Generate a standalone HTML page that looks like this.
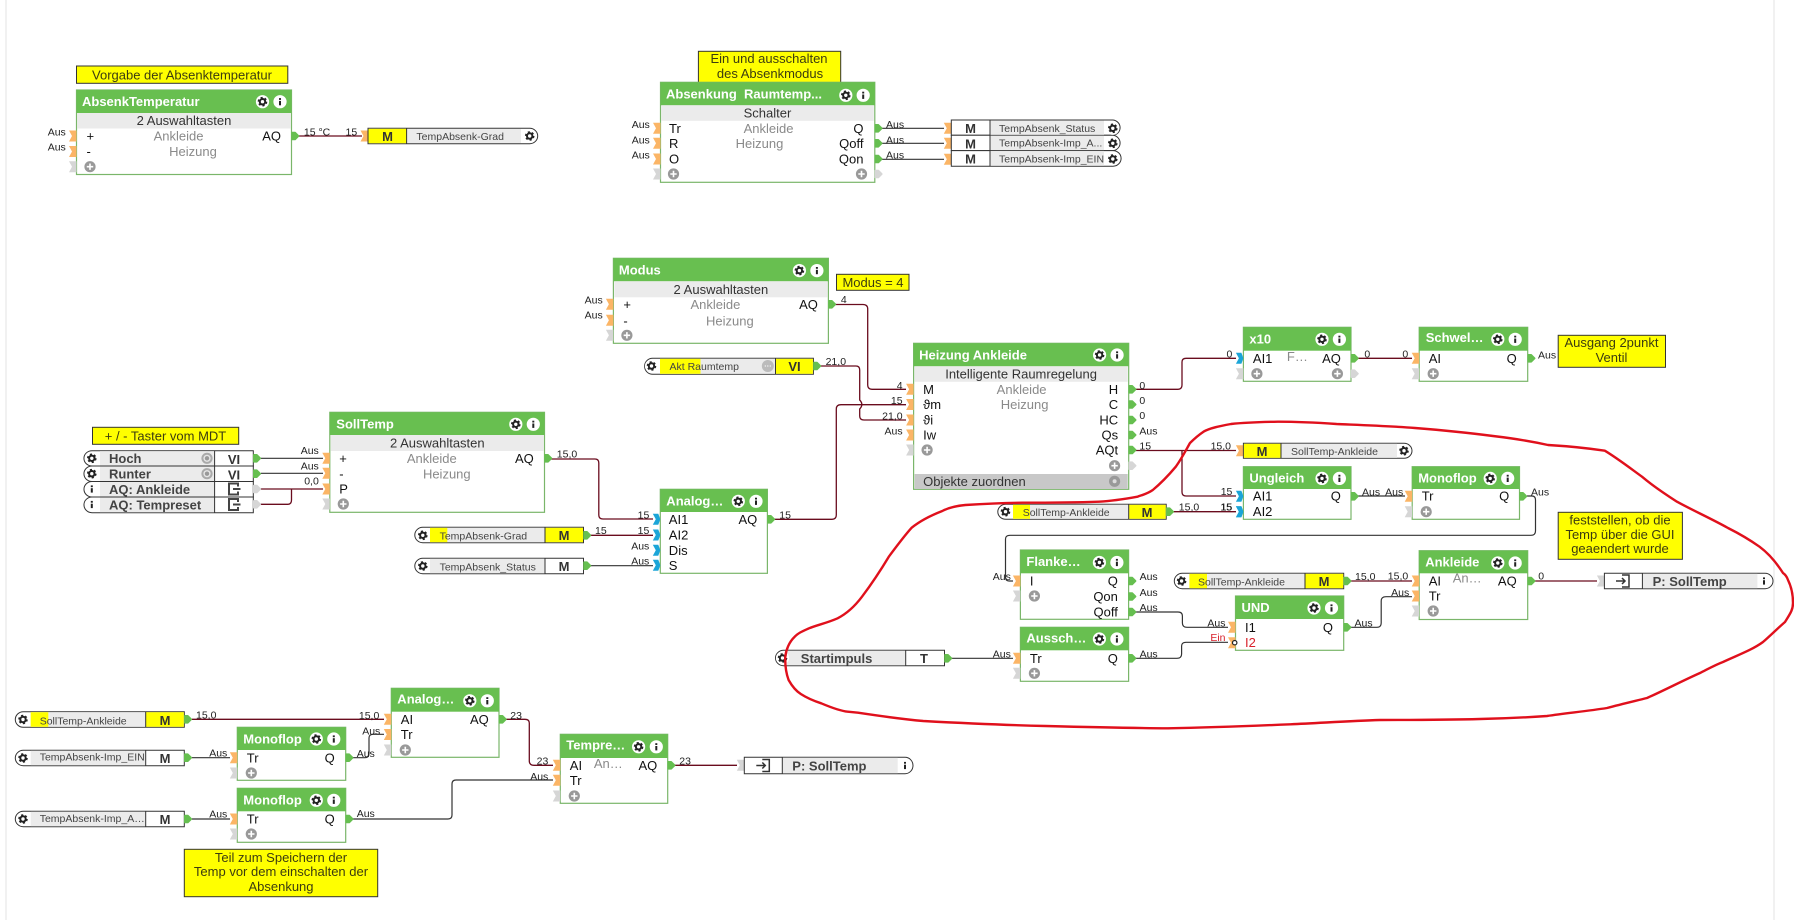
<!DOCTYPE html>
<html><head><meta charset="utf-8"><title>Logik</title>
<style>
html,body{margin:0;padding:0;background:#fff;width:1794px;height:920px;overflow:hidden}
svg{display:block;font-family:"Liberation Sans",Arial,sans-serif}
.bx{fill:#fff;stroke:#7ab66a;stroke-width:1.2}
.hd{fill:#68bf50}
.sb{fill:#ebebeb}
.tt{fill:#fff;font-weight:bold;font-size:13px}
.t{fill:#111;font-size:13px}
.tr{fill:#111;font-size:13px;text-anchor:end}
.g{fill:#8a8a8a;font-size:13px;text-anchor:middle}
.s{fill:#333;font-size:13px;text-anchor:middle}
.l{fill:#222;font-size:10.5px}
.le{fill:#222;font-size:10.5px;text-anchor:end}
.bt{fill:#444;font-size:10.5px}
.bb{fill:#444;font-size:13px;font-weight:bold}
.m{fill:#333;font-size:13px;font-weight:bold;text-anchor:middle}
.n{fill:#3c3c10;font-size:13px;text-anchor:middle}
.ny{fill:#ff0;stroke:#333;stroke-width:1}
.o{fill:#fff;stroke:#333;stroke-width:1}
.gr{fill:#ebebeb}
.ye{fill:#ff0}
.d{stroke:#333;stroke-width:1}
.w{fill:none;stroke:#333;stroke-width:1.2}
.r{fill:none;stroke:#6a0c1e;stroke-width:1.3}
</style></head><body>
<svg width="1794" height="920" viewBox="0 0 1794 920" xmlns="http://www.w3.org/2000/svg">
<defs>
<g id="ci"><path d="M-7.5-5.5H0V5.5H-7.5L-4.5 0Z" fill="#fbb566"/></g>
<g id="cb"><path d="M-7.5-5.5H-2L0 0-2 5.5H-7.5L-4.5 0Z" fill="#1ba5d8"/></g>
<g id="cg"><path d="M-7.5-5.5H0V5.5H-7.5L-4.5 0Z" fill="#d6d6d6"/></g>
<g id="co"><path d="M0.5-3.5H3.5L7 0 3.5 3.5H0.5Z" fill="#66bf50" stroke="#66bf50" stroke-width="1.6" stroke-linejoin="round"/></g>
<g id="cx"><path d="M0.5-3.5H3.5L7 0 3.5 3.5H0.5Z" fill="#d6d6d6" stroke="#d6d6d6" stroke-width="1.6" stroke-linejoin="round"/></g>
<g id="gi"><circle r="6.6" fill="#fff"/><circle r="2.7" fill="none" stroke="#222" stroke-width="2"/><circle r="4" fill="none" stroke="#222" stroke-width="1.6" stroke-dasharray="2.1 2.1"/></g>
<g id="in"><circle r="6.6" fill="#fff"/><rect x="-1" y="-3.6" width="2" height="1.8" fill="#222"/><rect x="-1" y="-0.8" width="2" height="4.4" fill="#222"/></g>
<g id="pl"><circle r="5.6" fill="#999"/><path d="M-3.2 0H3.2M0-3.2V3.2" stroke="#fff" stroke-width="1.6"/></g>
<g id="ex"><path d="M4-2.5V-5.5H-5V5.5H4V2.5M-1 0H6.5" fill="none" stroke="#444" stroke-width="2"/></g>
<g id="en"><path d="M-1-6H6V6H-1M-7 0H2M-1-3 2 0-1 3" fill="none" stroke="#333" stroke-width="1.5"/></g>
<g id="tg"><circle r="5.6" fill="#aaa"/><circle r="3.6" fill="#e6e6e6"/><circle r="2.2" fill="#999"/></g>
<g id="dt"><circle r="6" fill="#bbb"/><path d="M-3 0H-2M-.5 0H.5M2 0H3" stroke="#fff" stroke-width="1.3"/></g>
</defs>

<rect x="5" y="0" width="2" height="920" fill="#f1f1f1"/>
<rect x="1773" y="0" width="2" height="920" fill="#f1f1f1"/>

<!-- wires -->
<path class="r" d="M299 136H362"/>
<path class="r" d="M835 304.5H863Q867.7 304.5 867.7 309V385Q867.7 389.3 872 389.3H906"/>
<path class="r" d="M820 366H856Q859.7 366 859.7 370V400Q864 404.5 859.7 409V416Q859.7 420 864 420H906"/>
<path class="r" d="M774 519.3H832Q836.3 519.3 836.3 515V409Q836.3 404.7 841 404.7H906"/>
<path class="r" d="M1135 389.3H1178Q1182 389.3 1182 385V362Q1182 358.3 1186 358.3H1236"/>
<path class="r" d="M1135 450.5H1236"/>
<path class="r" d="M1182 450.5V492Q1182 496 1186 496H1236"/>
<path class="r" d="M1358 358.3H1412"/>
<path class="r" d="M551 459H595Q598.8 459 598.8 463V515Q598.8 519 603 519H653"/>
<path class="r" d="M590 535.3H653"/>
<path class="r" d="M260 489H323"/>
<path class="r" d="M260 504.3H288Q291.5 504.3 291.5 500V489"/>
<path class="r" d="M1173 511.7H1236"/>
<path class="r" d="M192 719.3H384"/>
<path class="r" d="M506 719.3H525Q529.3 719.3 529.3 723V761Q529.3 765.3 534 765.3H553"/>
<path class="r" d="M675 765.3H737"/>
<path class="r" d="M1350 581H1412"/>
<path class="r" d="M1535 581H1597"/>
<path class="w" d="M882 128.3H944M882 143.3H944M882 159.3H944"/>
<path class="w" d="M261 458.3H323M261 473.3H323"/>
<path class="w" d="M590 565.7H653"/>
<path class="w" d="M1358 496H1405"/>
<path class="w" d="M1527 496H1532Q1535.5 496 1535.5 500V531Q1535.5 535.3 1531 535.3H1010Q1005.5 535.3 1005.5 539V577Q1005.5 581 1009 581H1013"/>
<path class="w" d="M1135 612H1178Q1182.4 612 1182.4 616V623Q1182.4 627.3 1187 627.3H1228"/>
<path class="w" d="M1135 658.3H1177Q1181.6 658.3 1181.6 654V646Q1181.6 642.3 1186 642.3H1228"/>
<path class="w" d="M1350 627.3H1377Q1381.2 627.3 1381.2 623V601Q1381.2 596.7 1386 596.7H1412"/>
<path class="w" d="M951 658.3H1013"/>
<path class="w" d="M192 757.7H230"/>
<path class="w" d="M192 819H230"/>
<path class="w" d="M353 757.7H365Q369 757.7 369 753V738Q369 734.3 373 734.3H384"/>
<path class="w" d="M353 819H448Q452 819 452 815V784Q452 780 456 780H553"/>

<!-- notes -->
<rect class="ny" x="76.5" y="66" width="211.3" height="17.3"/><text class="n" x="182" y="79.5">Vorgabe der Absenktemperatur</text>
<rect class="ny" x="698.4" y="51.3" width="142.3" height="32"/><text class="n" x="769" y="63">Ein und ausschalten</text><text class="n" x="770" y="78">des Absenkmodus</text>
<rect class="ny" x="836.5" y="274.3" width="72.5" height="16"/><text class="n" x="873" y="287">Modus = 4</text>
<rect class="ny" x="92.5" y="427.3" width="146.2" height="17"/><text class="n" x="165.5" y="440.5">+ / - Taster vom MDT</text>
<rect class="ny" x="1558.2" y="335.3" width="107.3" height="32"/><text class="n" x="1611.5" y="347">Ausgang 2punkt</text><text class="n" x="1611.5" y="362">Ventil</text>
<rect class="ny" x="1558.2" y="512.3" width="124.2" height="47"/><text class="n" x="1620" y="524.5">feststellen, ob die</text><text class="n" x="1620" y="539">Temp über die GUI</text><text class="n" x="1620" y="553">geaendert wurde</text>
<rect class="ny" x="184.3" y="849.3" width="193.4" height="47.4"/><text class="n" x="281" y="862">Teil zum Speichern der</text><text class="n" x="281" y="876">Temp vor dem einschalten der</text><text class="n" x="281" y="891">Absenkung</text>

<!-- AbsenkTemperatur -->
<g transform="translate(76.5 90)">
<rect class="bx" width="215" height="84.5"/><rect class="hd" width="215" height="23"/><rect class="sb" x="1" y="23" width="213" height="15.5"/>
<text class="tt" x="5.5" y="16">AbsenkTemperatur</text><use href="#gi" x="186" y="11.7"/><use href="#in" x="203.5" y="11.7"/>
<text class="s" x="107.5" y="35">2 Auswahltasten</text>
<use href="#ci" y="46"/><use href="#ci" y="61.5"/><use href="#cg" y="76.7"/>
<text class="le" x="-10.7" y="45.5">Aus</text><text class="le" x="-10.7" y="60.5">Aus</text>
<text class="t" x="10" y="50.5">+</text><text class="t" x="10" y="66">-</text><use href="#pl" x="13.5" y="76.7"/>
<text class="g" x="102" y="50.5">Ankleide</text><text class="g" x="116.5" y="66">Heizung</text>
<text class="tr" x="204.5" y="50.5">AQ</text><use href="#co" x="215" y="46"/>
<text class="l" x="227.4" y="45.5">15 °C</text><text class="l" x="269" y="45.5">15</text>
</g>
<!-- M TempAbsenk-Grad -->
<use href="#ci" x="368" y="136"/>
<path class="o" d="M368 128.3H529.7A8 7.7 0 0 1 529.7 143.7H368Z"/><rect class="gr" x="407" y="129" width="114" height="14"/><rect class="ye" x="368.5" y="128.8" width="38" height="14.4"/><path class="d" d="M406.6 128.3V143.7"/>
<text class="m" x="387.5" y="141">M</text><text class="bt" x="416.4" y="140">TempAbsenk-Grad</text><use href="#gi" x="529.7" y="136"/>

<!-- Absenkung -->
<g transform="translate(660.5 82.3)">
<rect class="bx" width="214.3" height="100"/><rect class="hd" width="214.3" height="23"/><rect class="sb" x="1" y="23" width="212.3" height="15.5"/>
<text class="tt" x="5.5" y="16">Absenkung&#160; Raumtemp...</text><use href="#gi" x="185.3" y="13"/><use href="#in" x="202.7" y="13"/>
<text class="s" x="107" y="35">Schalter</text>
<use href="#ci" y="46"/><use href="#ci" y="61"/><use href="#ci" y="76.7"/><use href="#cg" y="91.7"/>
<text class="le" x="-10.7" y="45.5">Aus</text><text class="le" x="-10.7" y="61">Aus</text><text class="le" x="-10.7" y="76">Aus</text>
<text class="t" x="8.5" y="50.5">Tr</text><text class="t" x="8.5" y="65.5">R</text><text class="t" x="8.5" y="81.2">O</text><use href="#pl" x="13" y="91.7"/>
<text class="g" x="108" y="50.5">Ankleide</text><text class="g" x="99" y="65.5">Heizung</text>
<text class="tr" x="203" y="50.5">Q</text><text class="tr" x="203" y="65.5">Qoff</text><text class="tr" x="203" y="81.2">Qon</text><use href="#pl" x="201" y="91.7"/>
<use href="#co" x="214.3" y="46"/><use href="#co" x="214.3" y="61"/><use href="#co" x="214.3" y="76.7"/><use href="#cx" x="214.3" y="91.7"/>
<text class="l" x="225.5" y="45.5">Aus</text><text class="l" x="225.5" y="61">Aus</text><text class="l" x="225.5" y="76">Aus</text>
</g>
<!-- M triple -->
<use href="#ci" x="951.3" y="128.3"/><use href="#ci" x="951.3" y="143.3"/><use href="#ci" x="951.3" y="159.3"/>
<path class="o" d="M951.3 120H1113A8 7.7 0 0 1 1113 135.3H951.3Z"/>
<path class="o" d="M951.3 135.3H1113A8 7.7 0 0 1 1113 150.6H951.3Z"/>
<path class="o" d="M951.3 150.6H1113A8 7.7 0 0 1 1113 166.2H951.3Z"/>
<rect class="gr" x="990" y="120.5" width="114" height="14.3"/><rect class="gr" x="990" y="135.8" width="114" height="14.3"/><rect class="gr" x="990" y="151.1" width="114" height="14.6"/>
<path class="d" d="M990 120V166.2"/>
<text class="m" x="970.5" y="133">M</text><text class="m" x="970.5" y="148.5">M</text><text class="m" x="970.5" y="163.5">M</text>
<text class="bt" x="999" y="132">TempAbsenk_Status</text><text class="bt" x="999" y="146.5">TempAbsenk-Imp_A...</text><text class="bt" x="999" y="162.5">TempAbsenk-Imp_EIN</text>
<use href="#gi" x="1112.8" y="128.3"/><use href="#gi" x="1112.8" y="143.3"/><use href="#gi" x="1112.8" y="159"/>

<!-- Modus -->
<g transform="translate(613.4 258.3)">
<rect class="bx" width="215" height="85"/><rect class="hd" width="215" height="23"/><rect class="sb" x="1" y="23" width="213" height="16"/>
<text class="tt" x="5.5" y="16">Modus</text><use href="#gi" x="186" y="12.3"/><use href="#in" x="203.5" y="12.3"/>
<text class="s" x="107.5" y="35.5">2 Auswahltasten</text>
<use href="#ci" y="46"/><use href="#ci" y="62"/><use href="#cg" y="77"/>
<text class="le" x="-10.7" y="45">Aus</text><text class="le" x="-10.7" y="60">Aus</text>
<text class="t" x="10" y="50.5">+</text><text class="t" x="10" y="67">-</text><use href="#pl" x="13.5" y="77"/>
<text class="g" x="102" y="50.5">Ankleide</text><text class="g" x="116.5" y="67">Heizung</text>
<text class="tr" x="204.5" y="50.5">AQ</text><use href="#co" x="215" y="46"/>
<text class="l" x="227.5" y="44.5">4</text>
</g>

<!-- Akt Raumtemp -->
<path class="o" d="M652.6 358.3H813.4V374.3H652.6A8 8 0 0 1 652.6 358.3Z"/><rect class="gr" x="660" y="358.8" width="115.5" height="15"/><rect class="ye" x="660" y="358.8" width="40.5" height="15"/><rect class="ye" x="775.5" y="358.8" width="37.4" height="15"/><path class="d" d="M775.5 358.3V374.3"/>
<use href="#gi" x="651.5" y="366"/><text class="bt" x="669.5" y="370">Akt Raumtemp</text><use href="#dt" x="767.8" y="366"/><text class="m" x="794.5" y="371">VI</text>
<use href="#co" x="813.4" y="366"/><text class="l" x="825.6" y="365">21,0</text>

<!-- Heizung -->
<g transform="translate(913.6 343.3)">
<rect class="bx" width="215.1" height="146"/><rect class="hd" width="215.1" height="23"/><rect class="sb" x="1" y="23" width="213.1" height="15.5"/>
<rect x="1" y="130.7" width="213.1" height="15" fill="#c8c8c8"/>
<text class="tt" x="5.5" y="16">Heizung Ankleide</text><use href="#gi" x="186" y="11.7"/><use href="#in" x="203.5" y="11.7"/>
<text class="s" x="107.5" y="35">Intelligente Raumregelung</text>
<use href="#ci" y="46"/><use href="#ci" y="61.2"/><use href="#ci" y="76.7"/><use href="#ci" y="91.7"/><use href="#cg" y="106.7"/>
<text class="le" x="-11" y="45.5">4</text><text class="le" x="-11" y="60.5">15</text><text class="le" x="-11" y="76">21,0</text><text class="le" x="-11" y="91">Aus</text>
<text class="t" x="9.5" y="50.5">M</text><text class="t" x="9.5" y="65.7">ϑm</text><text class="t" x="9.5" y="81.2">ϑi</text><text class="t" x="9.5" y="96.2">Iw</text><use href="#pl" x="13.5" y="106.7"/>
<text class="g" x="108" y="50.5">Ankleide</text><text class="g" x="111" y="65.7">Heizung</text>
<text class="tr" x="204.5" y="50.5">H</text><text class="tr" x="204.5" y="65.7">C</text><text class="tr" x="204.5" y="81.2">HC</text><text class="tr" x="204.5" y="96.2">Qs</text><text class="tr" x="204.5" y="111.2">AQt</text><use href="#pl" x="201" y="122.4"/>
<use href="#co" x="215.1" y="46"/><use href="#co" x="215.1" y="61.2"/><use href="#co" x="215.1" y="76.7"/><use href="#co" x="215.1" y="91.7"/><use href="#co" x="215.1" y="106.7"/><use href="#cx" x="215.1" y="122.4"/>
<text class="l" x="225.8" y="45.5">0</text><text class="l" x="225.8" y="60.5">0</text><text class="l" x="225.8" y="75.5">0</text><text class="l" x="225.8" y="91">Aus</text><text class="l" x="225.8" y="106">15</text>
<text x="9.5" y="142.5" fill="#333" font-size="13">Objekte zuordnen</text><circle cx="201" cy="138" r="5.6" fill="#999"/><circle cx="201" cy="138" r="2" fill="#ddd"/>
</g>

<!-- x10 -->
<g transform="translate(1243.4 327.3)">
<rect class="bx" width="107.6" height="54"/><rect class="hd" width="107.6" height="23.4"/>
<text class="tt" x="6" y="16">x10</text><use href="#gi" x="78.6" y="12"/><use href="#in" x="96" y="12"/>
<use href="#cb" y="31"/><use href="#cg" y="46.4"/><text class="le" x="-11" y="30">0</text>
<text class="t" x="9.5" y="35.5">AI1</text><use href="#pl" x="13.5" y="46.4"/>
<text class="g" x="54" y="33.5">F…</text>
<text class="tr" x="97.5" y="35.5">AQ</text><use href="#pl" x="94" y="46.4"/><use href="#co" x="107.6" y="31"/><use href="#cx" x="107.6" y="46.4"/>
<text class="l" x="121" y="30">0</text>
</g>
<!-- Schwel -->
<g transform="translate(1419.2 327.3)">
<rect class="bx" width="108.5" height="54"/><rect class="hd" width="108.5" height="23.4"/>
<text class="tt" x="6.5" y="14.5">Schwel…</text><use href="#gi" x="78.6" y="12"/><use href="#in" x="96" y="12"/>
<use href="#ci" y="31"/><use href="#cg" y="46.4"/><text class="le" x="-11" y="30">0</text>
<text class="t" x="9.5" y="35.5">AI</text><use href="#pl" x="14" y="46.4"/>
<text class="tr" x="97.5" y="35.5">Q</text><use href="#co" x="108.5" y="31"/>
<text class="l" x="118.8" y="31">Aus</text>
</g>

<!-- M SollTemp-Ankleide right -->
<use href="#ci" x="1243.4" y="450.7"/><text class="le" x="1231" y="449.5">15,0</text>
<path class="o" d="M1243.4 443.3H1404A8 7.5 0 0 1 1404 458.3H1243.4Z"/><rect class="gr" x="1281" y="443.8" width="116" height="14"/><rect class="ye" x="1243.9" y="443.8" width="37" height="14"/><path class="d" d="M1281 443.3V458.3"/>
<text class="m" x="1262" y="456">M</text><text class="bt" x="1291" y="455">SollTemp-Ankleide</text><use href="#gi" x="1404" y="450.7"/>

<!-- Ungleich -->
<g transform="translate(1243.4 466.7)">
<rect class="bx" width="107.6" height="52.6"/><rect class="hd" width="107.6" height="22.3"/>
<text class="tt" x="6" y="16">Ungleich</text><use href="#gi" x="78.6" y="11.7"/><use href="#in" x="96" y="11.7"/>
<use href="#cb" y="29.6"/><use href="#cb" y="45"/><text class="le" x="-11" y="28.5">15</text><text class="le" x="-11" y="44">15</text>
<text class="t" x="9.5" y="34">AI1</text><text class="t" x="9.5" y="49.5">AI2</text>
<text class="tr" x="97.5" y="34">Q</text><use href="#co" x="107.6" y="29.6"/>
<text class="l" x="118.6" y="29">Aus</text>
</g>
<!-- Monoflop right -->
<g transform="translate(1412.2 466.7)">
<rect class="bx" width="107.3" height="52.6"/><rect class="hd" width="107.3" height="22.3"/>
<text class="tt" x="6" y="16">Monoflop</text><use href="#gi" x="78" y="11.7"/><use href="#in" x="95.5" y="11.7"/>
<use href="#ci" y="29.6"/><use href="#cg" y="45"/><text class="le" x="-9" y="29">Aus</text>
<text class="t" x="9.5" y="34">Tr</text><use href="#pl" x="14" y="45"/>
<text class="tr" x="97" y="34">Q</text><use href="#co" x="107.3" y="29.6"/>
<text class="l" x="118.8" y="29">Aus</text>
</g>

<!-- SollTemp-Ankleide centre -->
<path class="o" d="M1005.8 504.3H1166.2V519.3H1005.8A8 7.5 0 0 1 1005.8 504.3Z"/><rect class="gr" x="1013" y="504.8" width="115.7" height="14"/><rect class="ye" x="1013" y="504.8" width="17" height="14"/><rect class="ye" x="1128.7" y="504.8" width="37" height="14"/><path class="d" d="M1128.7 504.3V519.3"/>
<use href="#gi" x="1005.5" y="511.7"/><text class="bt" x="1022.7" y="516">SollTemp-Ankleide</text><text class="m" x="1147" y="517">M</text>
<use href="#co" x="1166.2" y="511.7"/><text class="l" x="1178.8" y="510.5">15,0</text>
<text class="le" x="1232" y="510.5">15</text><use href="#cb" x="1243.4" y="511.7"/>

<!-- Analog centre -->
<g transform="translate(660.3 489.3)">
<rect class="bx" width="107.1" height="84"/><rect class="hd" width="107.1" height="22.7"/>
<text class="tt" x="6" y="16">Analog…</text><use href="#gi" x="78" y="12"/><use href="#in" x="95.7" y="12"/>
<use href="#cb" y="30"/><use href="#cb" y="45.7"/><use href="#cb" y="61"/><use href="#cb" y="76"/>
<text class="le" x="-11" y="29">15</text><text class="le" x="-11" y="44.5">15</text><text class="le" x="-11" y="60">Aus</text><text class="le" x="-11" y="75">Aus</text>
<text class="t" x="8.5" y="34.5">AI1</text><text class="t" x="8.5" y="50.2">AI2</text><text class="t" x="8.5" y="65.5">Dis</text><text class="t" x="8.5" y="80.5">S</text>
<text class="tr" x="97" y="34.5">AQ</text><use href="#co" x="107.1" y="30"/>
<text class="l" x="119" y="29">15</text>
</g>

<!-- SollTemp -->
<g transform="translate(329.8 412.3)">
<rect class="bx" width="214.7" height="100"/><rect class="hd" width="214.7" height="22.7"/><rect class="sb" x="1" y="22.7" width="212.7" height="16"/>
<text class="tt" x="6.5" y="16">SollTemp</text><use href="#gi" x="186" y="12"/><use href="#in" x="203.5" y="12"/>
<text class="s" x="107.5" y="35">2 Auswahltasten</text>
<use href="#ci" y="46"/><use href="#ci" y="61"/><use href="#ci" y="76.7"/><use href="#cg" y="91.7"/>
<text class="le" x="-11" y="41.5">Aus</text><text class="le" x="-11" y="57">Aus</text><text class="le" x="-11" y="72">0,0</text>
<text class="t" x="9.5" y="50.5">+</text><text class="t" x="9.5" y="66">-</text><text class="t" x="9.5" y="81.2">P</text><use href="#pl" x="13.5" y="91.7"/>
<text class="g" x="102" y="50.5">Ankleide</text><text class="g" x="117" y="66">Heizung</text>
<text class="tr" x="204" y="50.5">AQ</text><use href="#co" x="214.7" y="46"/>
<text class="l" x="227" y="45">15,0</text>
</g>
<!-- left VI list -->
<path class="o" d="M92 450.7H253.3V466H92A8 7.6 0 0 1 92 450.7Z"/>
<path class="o" d="M92 466H253.3V481.5H92A8 7.7 0 0 1 92 466Z"/>
<path class="o" d="M92 481.5H253.3V497H92A8 7.7 0 0 1 92 481.5Z"/>
<path class="o" d="M92 497H253.3V512.7H92A8 7.8 0 0 1 92 497Z"/>
<rect class="gr" x="100" y="451.2" width="114.6" height="14.3"/><rect class="gr" x="100" y="466.5" width="114.6" height="14.5"/><rect class="gr" x="100" y="482" width="114.6" height="14.5"/><rect class="gr" x="100" y="497.5" width="114.6" height="14.7"/>
<path class="d" d="M214.6 450.7V512.7"/>
<use href="#gi" x="91.8" y="458.3"/><use href="#gi" x="91.8" y="473.7"/><use href="#in" x="91.8" y="489"/><use href="#in" x="91.8" y="504.5"/>
<text class="bb" x="109" y="463">Hoch</text><text class="bb" x="109" y="478.5">Runter</text><text class="bb" x="109" y="494">AQ: Ankleide</text><text class="bb" x="109" y="509.5">AQ: Tempreset</text>
<use href="#tg" x="207" y="458.3"/><use href="#tg" x="207" y="473.7"/>
<text class="m" x="234" y="464">VI</text><text class="m" x="234" y="479.5">VI</text><use href="#ex" x="234" y="489"/><use href="#ex" x="234" y="504.5"/>
<use href="#co" x="253.3" y="458.3"/><use href="#co" x="253.3" y="473.7"/><use href="#cx" x="253.3" y="489"/><use href="#cx" x="253.3" y="504.3"/>

<!-- TempAbsenk-Grad / Status -->
<path class="o" d="M422.8 527.3H583.5V542.7H422.8A8 7.7 0 0 1 422.8 527.3Z"/><rect class="gr" x="430" y="527.8" width="115" height="14.4"/><rect class="ye" x="430" y="527.8" width="17.3" height="14.4"/><rect class="ye" x="545" y="527.8" width="38" height="14.4"/><path class="d" d="M545 527.3V542.7"/>
<use href="#gi" x="422.8" y="535.3"/><text class="bt" x="439.6" y="539.5">TempAbsenk-Grad</text><text class="m" x="564" y="540">M</text>
<use href="#co" x="583.5" y="535.3"/><text class="l" x="595" y="534">15</text>
<path class="o" d="M422.8 558.3H583.5V573.7H422.8A8 7.7 0 0 1 422.8 558.3Z"/><rect class="gr" x="430" y="558.8" width="115" height="14.4"/><path class="d" d="M545 558.3V573.7"/>
<use href="#gi" x="422.8" y="566"/><text class="bt" x="439.6" y="570.5">TempAbsenk_Status</text><text class="m" x="564" y="571">M</text>
<use href="#co" x="583.5" y="565.7"/>

<!-- Flanke -->
<g transform="translate(1020.4 550)">
<rect class="bx" width="108.2" height="69.3"/><rect class="hd" width="108.2" height="23.3"/>
<text class="tt" x="6" y="16">Flanke…</text><use href="#gi" x="79" y="12.5"/><use href="#in" x="96.5" y="12.5"/>
<use href="#ci" y="31"/><use href="#cg" y="46"/><text class="le" x="-9.5" y="30">Aus</text>
<text class="t" x="9.5" y="35.5">I</text><use href="#pl" x="14" y="46"/>
<text class="tr" x="97.5" y="35.5">Q</text><text class="tr" x="97.5" y="51">Qon</text><text class="tr" x="97.5" y="66.5">Qoff</text>
<use href="#co" x="108.2" y="31"/><use href="#co" x="108.2" y="46.5"/><use href="#co" x="108.2" y="62"/>
<text class="l" x="119.2" y="30">Aus</text><text class="l" x="119.2" y="46">Aus</text><text class="l" x="119.2" y="61">Aus</text>
</g>
<!-- Aussch -->
<g transform="translate(1020.4 627.3)">
<rect class="bx" width="108.2" height="54"/><rect class="hd" width="108.2" height="23"/>
<text class="tt" x="6" y="15">Aussch…</text><use href="#gi" x="79" y="11.7"/><use href="#in" x="96.5" y="11.7"/>
<use href="#ci" y="31"/><use href="#cg" y="46"/><text class="le" x="-9.5" y="30">Aus</text>
<text class="t" x="9.5" y="35.5">Tr</text><use href="#pl" x="14" y="46"/>
<text class="tr" x="97.5" y="35.5">Q</text><use href="#co" x="108.2" y="31"/>
<text class="l" x="119.2" y="30">Aus</text>
</g>
<!-- UND -->
<g transform="translate(1235.5 596)">
<rect class="bx" width="108.2" height="54.3"/><rect class="hd" width="108.2" height="23"/>
<text class="tt" x="6" y="16">UND</text><use href="#gi" x="78.5" y="12"/><use href="#in" x="96" y="12"/>
<use href="#ci" y="31.3"/><use href="#ci" y="46.7"/><circle cx="-.8" cy="46.7" r="2.2" fill="#fff" stroke="#222" stroke-width="1.2"/>
<text class="le" x="-10" y="30.5">Aus</text><text class="le" x="-10" y="45" style="fill:#d8202a">Ein</text>
<text class="t" x="9.5" y="35.8">I1</text><text class="t" x="9.5" y="51.2" style="fill:#d8202a">I2</text>
<text class="tr" x="97.5" y="35.8">Q</text><use href="#co" x="108.2" y="31.3"/>
<text class="l" x="119" y="30.5">Aus</text>
</g>
<!-- SollTemp-Ankleide lower right -->
<path class="o" d="M1182.3 573.3H1343.7V588.7H1182.3A8 7.7 0 0 1 1182.3 573.3Z"/><rect class="gr" x="1189.4" y="573.8" width="115.6" height="14.4"/><rect class="ye" x="1189.4" y="573.8" width="17.6" height="14.4"/><rect class="ye" x="1305" y="573.8" width="38.2" height="14.4"/><path class="d" d="M1305 573.3V588.7"/>
<use href="#gi" x="1181.6" y="581"/><text class="bt" x="1198" y="585.5">SollTemp-Ankleide</text><text class="m" x="1324" y="586">M</text>
<use href="#co" x="1343.7" y="581"/><text class="l" x="1355" y="580">15,0</text>
<!-- Ankleide -->
<g transform="translate(1419.2 550.7)">
<rect class="bx" width="108.5" height="68.8"/><rect class="hd" width="108.5" height="22.6"/>
<text class="tt" x="6" y="16">Ankleide</text><use href="#gi" x="78.6" y="12.3"/><use href="#in" x="96" y="12.3"/>
<use href="#ci" y="30.3"/><use href="#ci" y="45.3"/><use href="#cg" y="60.3"/>
<text class="le" x="-11" y="29">15,0</text><text class="le" x="-10" y="45.5">Aus</text>
<text class="t" x="9.5" y="34.8">AI</text><text class="t" x="9.5" y="49.8">Tr</text><use href="#pl" x="14" y="60.3"/>
<text class="g" x="48" y="32">An…</text>
<text class="tr" x="97.5" y="34.8">AQ</text><use href="#co" x="108.5" y="30.3"/>
<text class="l" x="119" y="29">0</text>
</g>
<!-- P: SollTemp right -->
<use href="#cg" x="1604.4" y="581"/>
<path class="o" d="M1604.4 573.3H1765A8 7.7 0 0 1 1765 588.7H1604.4Z"/><rect class="gr" x="1642.4" y="573.8" width="115" height="14.4"/><path class="d" d="M1642.4 573.3V588.7"/>
<use href="#en" x="1623" y="581"/><text class="bb" x="1652.6" y="586">P: SollTemp</text><use href="#in" x="1764" y="581"/>

<!-- Startimpuls -->
<path class="o" d="M783.5 650.3H944.5V665.7H783.5A8 7.7 0 0 1 783.5 650.3Z"/><rect class="gr" x="787" y="650.8" width="118.7" height="14.4"/><path class="d" d="M905.7 650.3V665.7"/>
<use href="#gi" x="782.5" y="658"/><text class="bb" x="800.8" y="663">Startimpuls</text><text class="m" x="924" y="663">T</text>
<use href="#co" x="944.5" y="658.3"/>

<!-- SollTemp-Ankleide bottom left -->
<path class="o" d="M23.3 711.7H184.3V727.3H23.3A8 7.8 0 0 1 23.3 711.7Z"/><rect class="gr" x="30.7" y="712.2" width="115" height="14.6"/><rect class="ye" x="30.7" y="712.2" width="17.6" height="14.6"/><rect class="ye" x="145.7" y="712.2" width="38.1" height="14.6"/><path class="d" d="M145.7 711.7V727.3"/>
<use href="#gi" x="23" y="719.5"/><text class="bt" x="39.7" y="724.5">SollTemp-Ankleide</text><text class="m" x="165" y="725">M</text>
<use href="#co" x="184.3" y="719.3"/><text class="l" x="196" y="718.5">15,0</text>
<path class="o" d="M23.3 750.3H184.3V765.7H23.3A8 7.7 0 0 1 23.3 750.3Z"/><rect class="gr" x="30.7" y="750.8" width="115" height="14.4"/><path class="d" d="M145.7 750.3V765.7"/>
<use href="#gi" x="23" y="758"/><text class="bt" x="39.7" y="760.5">TempAbsenk-Imp_EIN</text><text class="m" x="165" y="763">M</text>
<use href="#co" x="184.3" y="757.7"/>
<path class="o" d="M23.3 811.3H184.3V826.7H23.3A8 7.7 0 0 1 23.3 811.3Z"/><rect class="gr" x="30.7" y="811.8" width="115" height="14.4"/><path class="d" d="M145.7 811.3V826.7"/>
<use href="#gi" x="23" y="819"/><text class="bt" x="39.7" y="822">TempAbsenk-Imp_A…</text><text class="m" x="165" y="824">M</text>
<use href="#co" x="184.3" y="819"/>

<!-- Monoflop a -->
<g transform="translate(237.3 727.3)">
<rect class="bx" width="108.4" height="53"/><rect class="hd" width="108.4" height="22.7"/>
<text class="tt" x="6" y="16">Monoflop</text><use href="#gi" x="79" y="11.7"/><use href="#in" x="96.5" y="11.7"/>
<use href="#ci" y="30.4"/><use href="#cg" y="45.7"/><text class="le" x="-10" y="29">Aus</text>
<text class="t" x="9.5" y="35">Tr</text><use href="#pl" x="14" y="45.7"/>
<text class="tr" x="97.5" y="35">Q</text><use href="#co" x="108.4" y="30.4"/>
<text class="l" x="119.4" y="29.5">Aus</text>
</g>
<!-- Monoflop b -->
<g transform="translate(237.3 788.3)">
<rect class="bx" width="108.4" height="54"/><rect class="hd" width="108.4" height="23"/>
<text class="tt" x="6" y="16">Monoflop</text><use href="#gi" x="79" y="12"/><use href="#in" x="96.5" y="12"/>
<use href="#ci" y="30.7"/><use href="#cg" y="45.7"/><text class="le" x="-10" y="29">Aus</text>
<text class="t" x="9.5" y="35.2">Tr</text><use href="#pl" x="14" y="45.7"/>
<text class="tr" x="97.5" y="35.2">Q</text><use href="#co" x="108.4" y="30.7"/>
<text class="l" x="119.4" y="28.5">Aus</text>
</g>
<!-- Analog bottom -->
<g transform="translate(391.3 688.3)">
<rect class="bx" width="107.7" height="69"/><rect class="hd" width="107.7" height="23.4"/>
<text class="tt" x="6" y="15">Analog…</text><use href="#gi" x="78.5" y="12.5"/><use href="#in" x="96" y="12.5"/>
<use href="#ci" y="31"/><use href="#ci" y="46.2"/><use href="#cg" y="61.7"/>
<text class="le" x="-12" y="30.5">15,0</text><text class="le" x="-11" y="46">Aus</text>
<text class="t" x="9.5" y="35.5">AI</text><text class="t" x="9.5" y="50.7">Tr</text><use href="#pl" x="14" y="61.7"/>
<text class="tr" x="97.5" y="35.5">AQ</text><use href="#co" x="107.7" y="31"/>
<text class="l" x="119" y="30.5">23</text>
</g>
<!-- Tempre -->
<g transform="translate(560.3 734.3)">
<rect class="bx" width="107.4" height="69"/><rect class="hd" width="107.4" height="23.7"/>
<text class="tt" x="6" y="15">Tempre…</text><use href="#gi" x="78.3" y="12.5"/><use href="#in" x="96" y="12.5"/>
<use href="#ci" y="31"/><use href="#ci" y="46"/><use href="#cg" y="61.7"/>
<text class="le" x="-12" y="30">23</text><text class="le" x="-12" y="45.5">Aus</text>
<text class="t" x="9.5" y="35.5">AI</text><text class="t" x="9.5" y="50.5">Tr</text><use href="#pl" x="14" y="61.7"/>
<text class="g" x="48" y="33.5">An…</text>
<text class="tr" x="97" y="35.5">AQ</text><use href="#co" x="107.4" y="31"/>
<text class="l" x="119" y="30">23</text>
</g>
<!-- P: SollTemp bottom -->
<use href="#cg" x="744.3" y="765.3"/>
<path class="o" d="M744.3 757.3H905A8 8.2 0 0 1 905 773.7H744.3Z"/><rect class="gr" x="782.3" y="757.8" width="115.4" height="15.4"/><path class="d" d="M782.3 757.3V773.7"/>
<use href="#en" x="763.3" y="765.5"/><text class="bb" x="792.3" y="770.5">P: SollTemp</text><use href="#in" x="905" y="765.5"/>

<!-- red freehand -->
<path fill="none" stroke="#e0101c" stroke-width="2.4" stroke-linejoin="round" stroke-linecap="round" d="M1604.8 450.7C1580 447 1565 446 1548 445C1530 441 1510 438 1493 436C1470 433 1440 430 1415 428C1390 426 1360 425 1336.6 424C1315 422.5 1295 421.7 1278 421.7C1260 422 1245 422.5 1231 424C1220 426 1210 428 1203.5 431.7C1197 436 1192 441 1190 443C1186 450 1182 458 1175.8 466.7C1168 476 1160 484 1152.8 490C1147 494 1142 495 1137.5 496.7C1125 499 1112 501 1099 501.7C1075 502.5 1045 502.7 1022.7 502.7C1000 503 982 504 965.3 505C955 506 948 508 942.3 511C932 515 920 521 911.7 527.7C905 535 896 547 888.8 556.7C882 568 873 582 862 596.7C855 606 846 614 837.6 618.3C827 623 817 625 809 628.3C803 631 798 633 794.7 636.7C789 642 786 650 785.3 656.7C785 665 786 673 788.6 680C792 686 796 691 800.8 694C807 698 814 701 821.2 703.3C830 707 840 711 847.8 711.7L858 712.7C880 716 900 719 923.3 721C960 723 1000 725 1045.7 726C1085 727 1125 728 1168 728.3C1210 727.5 1250 726 1290.6 724.3C1320 723 1350 721 1380 720C1410 720 1445 720 1480 719C1505 718.5 1525 717.5 1547 716C1568 713 1588 711 1607 708C1622 704 1635 701 1647 698C1665 690 1682 681 1700 673C1708 669 1715 665 1723 662C1738 655 1752 650 1763 642C1770 636 1778 628 1785 622C1790 614 1793 610 1793 603C1793 595 1792 588 1788 580C1787 577 1786 575 1783 573C1776 562 1768 553 1759.5 546.7C1750 540 1740 534 1728 528C1712 519 1692 510 1677 501.7C1665 494 1653 486 1642 476.7C1630 468 1617 458 1604.8 450.7"/>
</svg>
</body></html>
